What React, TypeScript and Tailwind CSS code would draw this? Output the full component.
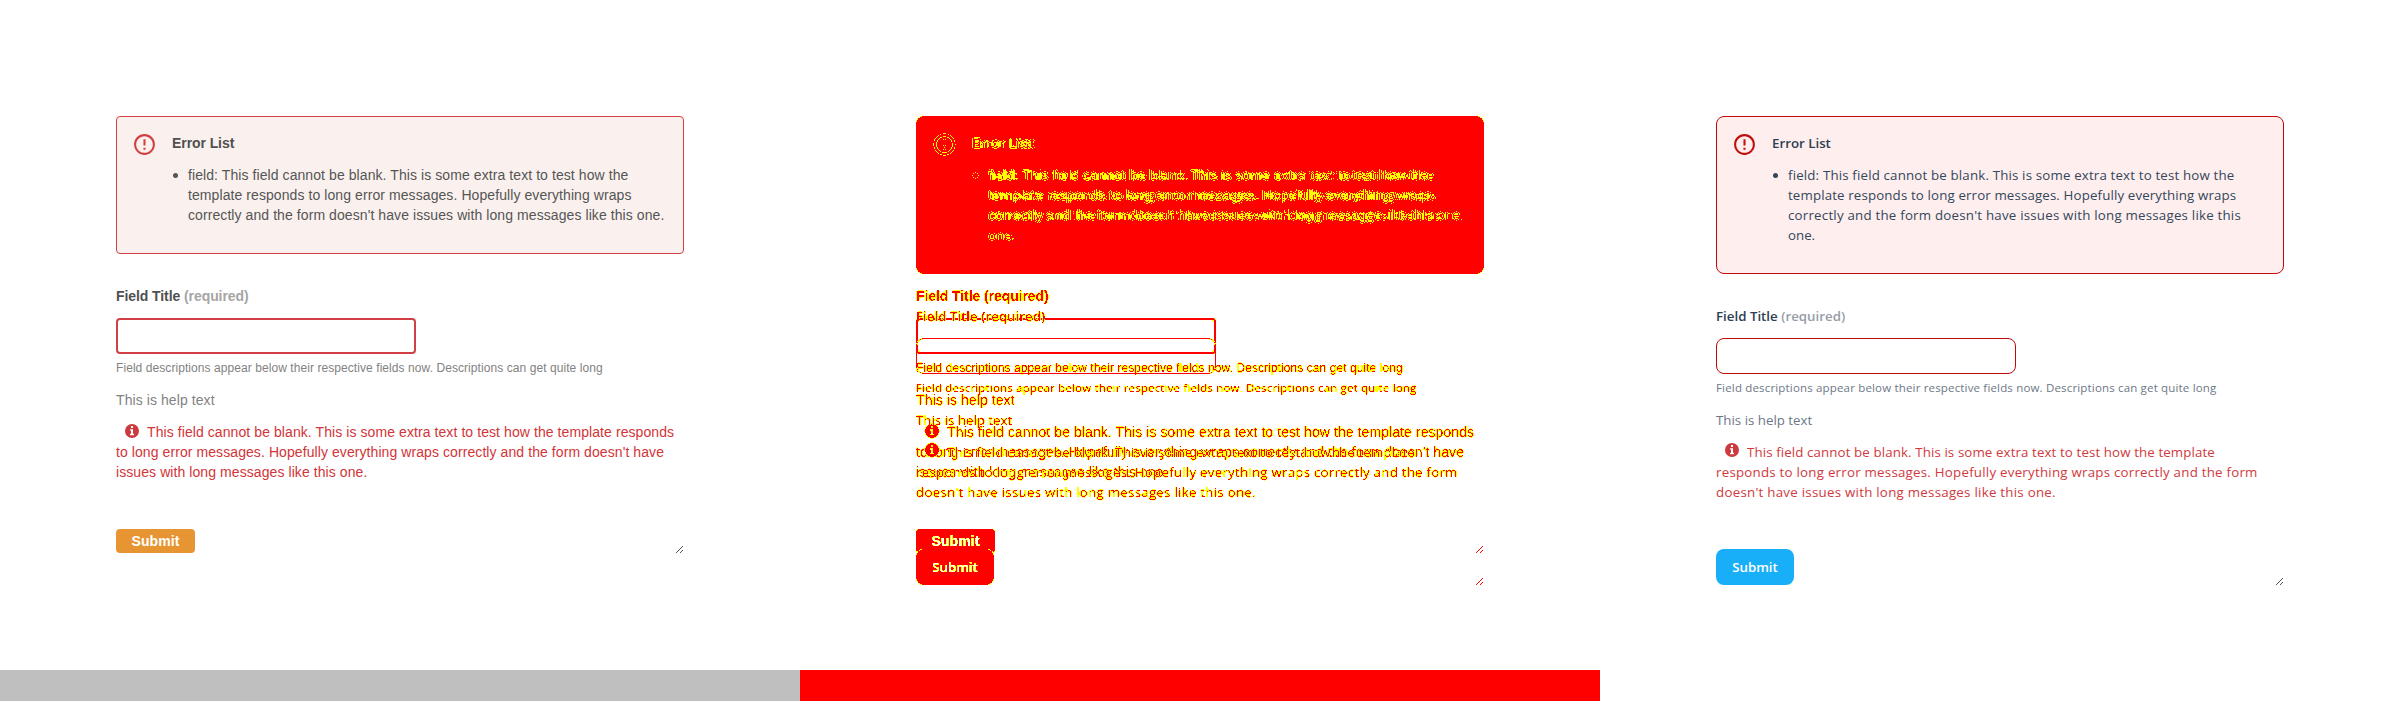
import React from "react";

type Theme = "legacy" | "modern";
type Line = { text: string; track?: string };

const copy: Record<Theme, { list: Line[]; error: Line[] }> = {
  legacy: {
    list: [
      { text: "field: This field cannot be blank. This is some extra text to test how the" },
      { text: "template responds to long error messages. Hopefully everything wraps" },
      { text: "correctly and the form doesn't have issues with long messages like this one." },
    ],
    error: [
      { text: "This field cannot be blank. This is some extra text to test how the template responds" },
      { text: "to long error messages. Hopefully everything wraps correctly and the form doesn't have" },
      { text: "issues with long messages like this one." },
    ],
  },
  modern: {
    list: [
      {
        text: "field: This field cannot be blank. This is some extra text to test how the",
        track: "tracking-[0.165px]",
      },
      {
        text: "template responds to long error messages. Hopefully everything wraps",
        track: "tracking-[0.135px]",
      },
      {
        text: "correctly and the form doesn't have issues with long messages like this",
        track: "tracking-[0.22px]",
      },
      { text: "one." },
    ],
    error: [
      {
        text: "This field cannot be blank. This is some extra text to test how the template",
        track: "tracking-[0.11px]",
      },
      {
        text: "responds to long error messages. Hopefully everything wraps correctly and the form",
        track: "tracking-[0.24px]",
      },
      {
        text: "doesn't have issues with long messages like this one.",
        track: "tracking-[0.26px]",
      },
    ],
  },
};

const palette = {
  legacy: {
    body: "font-['Liberation_Sans',Arial,sans-serif] text-[14px] tracking-[0.08px]",
    small: "text-[12px] tracking-[0.07px]",
    heading: "font-bold tracking-[-0.08px]",
    radius: "rounded-[4px]",
    boxHeight: "h-[138px]",
    box: "border-[#d04045] bg-[#faf1ee]",
    icon: "text-[#d23f42]",
    text: "text-[#555555]",
    label: "text-[#505050]",
    required: "text-[#a5a5a5]",
    inputWidth: "border-2",
    input: "border-[#d04045] bg-white",
    hint: "text-[#828282]",
    error: "text-[#d23438]",
    info: "text-[#cc3a3d]",
    infoOffset: "mt-[2px]",
    buttonSize: "h-6 w-[79px] font-bold",
    button: "bg-[#e69532]",
  },
  modern: {
    body: "font-['Open_Sans',sans-serif] text-[13.3px]",
    small: "text-[11.5px] tracking-[0.17px]",
    heading: "font-semibold",
    radius: "rounded-[8px]",
    boxHeight: "h-[158px]",
    box: "border-[#be0a0a] bg-[#feeeee]",
    icon: "text-[#c0100c]",
    text: "text-[#33475b]",
    label: "text-[#2c3e50]",
    required: "text-[#959da6]",
    inputWidth: "border",
    input: "border-[#be0a0a] bg-white",
    hint: "text-[#6d7886]",
    error: "text-[#d0393d]",
    info: "text-[#cc3a3d]",
    infoOffset: "mt-px",
    buttonSize: "h-9 w-[78px] font-semibold",
    button: "bg-[#18aef8]",
  },
};

const AlertIcon = ({ className }: { className: string }) => (
  <svg viewBox="0 0 24 24" className={`h-[25px] w-[25px] shrink-0 fill-current ${className}`}>
    <path d="M11 15h2v2h-2zm0-8h2v6h-2zm.99-5C6.47 2 2 6.48 2 12s4.47 10 9.99 10C17.52 22 22 17.52 22 12S17.52 2 11.99 2zM12 20c-4.42 0-8-3.58-8-8s3.58-8 8-8 8 3.58 8 8-3.58 8-8 8z" />
  </svg>
);

const InfoIcon = ({ className }: { className: string }) => (
  <svg viewBox="0 0 14 14" className={`h-[14px] w-[14px] shrink-0 ${className}`}>
    <path
      fill="currentColor"
      fillRule="evenodd"
      d="M7 0a7 7 0 1 0 0 14A7 7 0 0 0 7 0zM6 2h2v2H6zM5 5.200h3v4.600h1v1.400H5V9.800h1V6.600H5z"
    />
  </svg>
);

const ResizeHandle = ({ className }: { className: string }) => (
  <svg viewBox="0 0 8 8" shapeRendering="crispEdges" className={`h-2 w-2 ${className}`}>
    <path
      fill="currentColor"
      d="M0 7h1v1H0zM1 6h1v1H1zM2 5h1v1H2zM3 4h1v1H3zM4 3h1v1H4zM5 2h1v1H5zM6 1h1v1H6zM4 7h1v1H4zM5 6h1v1H5zM6 5h1v1H6z"
    />
  </svg>
);

const Lines = ({ lines }: { lines: Line[] }) => (
  <>
    {lines.map(({ text, track = "" }) => (
      <span key={text} className={`block whitespace-nowrap ${track}`}>
        {text}
      </span>
    ))}
  </>
);

function Form({ theme, diff = false }: { theme: Theme; diff?: boolean }) {
  const p = palette[theme];
  const edges = diff ? "[filter:url(#edges)]" : "";
  const halo = diff ? "[filter:url(#halo)]" : "";
  const outline = diff ? "[filter:url(#outline)]" : "";
  const hollow = diff ? "text-black [filter:url(#hollow)]" : "text-white";
  const ink = (cls: string) => (diff ? "text-black" : cls);
  return (
    <div className={`w-[800px] px-[116px] pt-[116px] leading-5 ${p.body}`}>
      <div
        className={`${p.boxHeight} w-[568px] ${diff ? "" : `border ${p.radius} ${p.box}`}`}
      >
        <div className={`flex ${diff ? "pt-4 pl-4" : "pt-[15px] pl-[15px]"} ${outline}`}>
          <AlertIcon className={ink(p.icon)} />
          <div className={`ml-[15px] ${ink(p.text)}`}>
            <p className={`pt-px ${p.heading} ${ink(p.label)}`}>Error List</p>
            <div className="mt-3 flex">
              <span className="mt-[8px] mr-[10px] ml-px h-[5px] w-[5px] rounded-full bg-current" />
              <div>
                <Lines lines={copy[theme].list} />
              </div>
            </div>
          </div>
        </div>
      </div>
      <p className={`mt-8 h-5 whitespace-nowrap ${p.heading} ${ink(p.label)} ${halo}`}>
        Field Title <span className={ink(p.required)}>(required)</span>
      </p>
      <div
        className={`mt-3 h-9 w-[300px] ${p.radius} ${p.inputWidth} ${diff ? "border-black" : p.input} ${edges}`}
      />
      <div className={halo}>
        <p className={`mt-1 h-5 leading-5 whitespace-nowrap ${p.small} ${ink(p.hint)}`}>
          Field descriptions appear below their respective fields now. Descriptions can get quite long
        </p>
        <p className={`mt-3 ${ink(p.hint)}`}>This is help text</p>
        <div className={`mt-3 ${ink(p.error)}`}>
          <div className="flex pl-[9px]">
            <InfoIcon className={`mr-[8px] ${p.infoOffset} ${ink(p.info)}`} />
            <div>
              <Lines lines={copy[theme].error.slice(0, 1)} />
            </div>
          </div>
          <Lines lines={copy[theme].error.slice(1)} />
        </div>
      </div>
      <div className="mt-[47px] flex items-end justify-between">
        <div className={`grid ${p.buttonSize}`}>
          <span
            className={`col-start-1 row-start-1 ${p.radius} ${diff ? "bg-black" : p.button} ${edges}`}
          />
          <span
            className={`col-start-1 row-start-1 flex items-center justify-center ${hollow}`}
          >
            Submit
          </span>
        </div>
        <ResizeHandle className={diff ? "text-[#ff0000]" : "text-[#555555]"} />
      </div>
    </div>
  );
}

function EdgeFilters() {
  return (
    <svg className="absolute h-0 w-0">
      <defs>
        <filter id="edges" colorInterpolationFilters="sRGB" x="-2%" y="-10%" width="104%" height="120%">
          <feColorMatrix values="0 0 0 0 1  0 0 0 1 0  0 0 0 0 0  0 0 0 1 0" />
          <feComponentTransfer>
            <feFuncG type="discrete" tableValues="1 1 1 1 1 1 1 0 0 0" />
            <feFuncA type="discrete" tableValues="0 1 1 1 1 1 1 1 1 1" />
          </feComponentTransfer>
        </filter>
        <filter id="halo" colorInterpolationFilters="sRGB" x="-2%" y="-20%" width="104%" height="140%">
          <feComponentTransfer in="SourceAlpha" result="core">
            <feFuncA type="discrete" tableValues="0 0 0 0 0 0 1 1 1 1" />
          </feComponentTransfer>
          <feConvolveMatrix
            in="SourceAlpha"
            order="3"
            kernelMatrix="1 2 1 2 4 2 1 2 1"
            divisor="16"
            edgeMode="none"
            preserveAlpha="false"
          />
          <feComponentTransfer result="wide">
            <feFuncA type="discrete" tableValues="0 0 1 1 1 1 1 1 1 1" />
          </feComponentTransfer>
          <feFlood floodColor="#ffff00" />
          <feComposite in2="wide" operator="in" result="yellow" />
          <feFlood floodColor="#ff0000" />
          <feComposite in2="core" operator="in" result="red" />
          <feMerge>
            <feMergeNode in="yellow" />
            <feMergeNode in="red" />
          </feMerge>
        </filter>
        <filter id="outline" colorInterpolationFilters="sRGB" x="-2%" y="-10%" width="104%" height="120%">
          <feComponentTransfer in="SourceAlpha" result="core">
            <feFuncA type="discrete" tableValues="0 0 0 0 0 1 1 1 1 1" />
          </feComponentTransfer>
          <feConvolveMatrix
            in="SourceAlpha"
            order="3"
            kernelMatrix="1 2 1 2 4 2 1 2 1"
            divisor="16"
            edgeMode="none"
            preserveAlpha="false"
          />
          <feComponentTransfer result="wide">
            <feFuncA type="discrete" tableValues="0 0 1 1 1 1 1 1 1 1" />
          </feComponentTransfer>
          <feComposite in="wide" in2="core" operator="out" result="ring" />
          <feFlood floodColor="#ffff00" />
          <feComposite in2="ring" operator="in" />
        </filter>
        <filter id="hollow" colorInterpolationFilters="sRGB">
          <feColorMatrix values="0 0 0 0 1  0 0 0 0 1  0 0 0 1 0  0 0 0 1 0" />
          <feComponentTransfer>
            <feFuncB type="discrete" tableValues="0 0 0 0 0 0 0 1 1 1" />
            <feFuncA type="discrete" tableValues="0 1 1 1 1 1 1 1 1 1" />
          </feComponentTransfer>
        </filter>
      </defs>
    </svg>
  );
}

function DiffView() {
  return (
    <div className="grid h-full w-[800px]">
      <div className="col-start-1 row-start-1 px-[116px] pt-[116px]">
        <div className="h-[158px] rounded-[8px] bg-black [filter:url(#edges)]" />
      </div>
      <div className="col-start-1 row-start-1">
        <Form theme="legacy" diff />
      </div>
      <div className="col-start-1 row-start-1">
        <Form theme="modern" diff />
      </div>
    </div>
  );
}

export default function App() {
  return (
    <div className="flex h-[701px] w-[2400px] overflow-hidden bg-white">
      <EdgeFilters />
      <section className="flex w-[800px] flex-col justify-between">
        <Form theme="legacy" />
        <div className="h-[31px] bg-[#bfbfbf]" />
      </section>
      <section className="flex w-[800px] flex-col">
        <div className="h-[670px]">
          <DiffView />
        </div>
        <div className="h-[31px] bg-[#ff0000]" />
      </section>
      <section className="w-[800px]">
        <Form theme="modern" />
      </section>
    </div>
  );
}
